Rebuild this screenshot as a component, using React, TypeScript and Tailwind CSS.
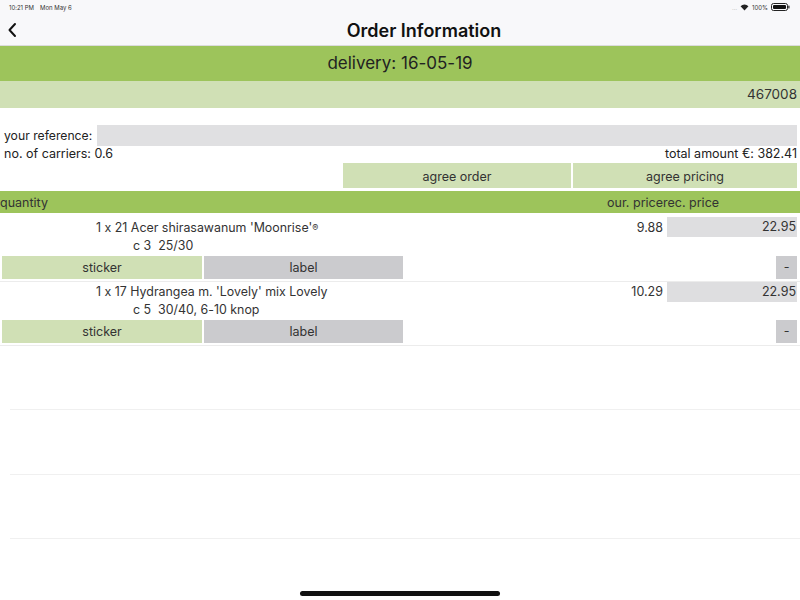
import React from "react";

function Battery() {
  return (
    <svg width="19" height="8" viewBox="0 0 19 8">
      <rect x="0.5" y="0.5" width="16" height="7" rx="2" fill="none" stroke="#222" strokeWidth="1" />
      <rect x="2" y="2" width="13" height="4" rx="1" fill="#111" />
      <rect x="17.3" y="2.5" width="1.2" height="3" rx="0.5" fill="#222" />
    </svg>
  );
}

function Wifi() {
  return (
    <svg width="9" height="7" viewBox="0 0 10 8">
      <path d="M5 7.5 L0.5 2.5 A6.5 6.5 0 0 1 9.5 2.5 Z" fill="#222" />
    </svg>
  );
}

type Item = { line1: string; line2: string; our: string; rec: string };

const items: Item[] = [
  { line1: "1 x 21 Acer shirasawanum 'Moonrise'", line2: "c 3  25/30", our: "9.88", rec: "22.95" },
  { line1: "1 x 17 Hydrangea m. 'Lovely' mix Lovely", line2: "c 5  30/40, 6-10 knop", our: "10.29", rec: "22.95" },
];

function ItemRow({ item, first }: { item: Item; first?: boolean }) {
  return (
    <div className="flex flex-col border-b border-[#ececec]">
      <div className={first ? "flex h-[43px]" : "flex h-[38px]"}>
        <div className={first ? "flex-1 pt-[6px] text-[12.4px] leading-[18px] text-[#333]" : "flex-1 pt-[1px] text-[12.4px] leading-[18px] text-[#333]"}>
          <div className="pl-[96px] whitespace-pre">
            {item.line1}
            {first ? <sup className="text-[9px] relative top-[-1px]">®</sup> : null}
          </div>
          <div className="pl-[133px] whitespace-pre">{item.line2}</div>
        </div>
        <div className={first ? "w-[100px] pt-[6px] text-right text-[12.5px] leading-[18px] text-[#333] pr-[4px]" : "w-[100px] pt-[1px] text-right text-[12.5px] leading-[18px] text-[#333] pr-[4px]"}>
          {item.our}
        </div>
        <div className={first ? "w-[133px] pt-[4px] pr-[3px]" : "w-[133px] pt-0 pr-[3px]"}>
          <div className="h-[20px] bg-[#dedee0] text-right text-[12.5px] leading-[20px] text-[#333] pr-[1px]">
            {item.rec}
          </div>
        </div>
      </div>
      <div className="flex h-[23px] mb-[2px] pl-[2px] pr-[3px]">
        <div className="w-[200px] bg-[#d0e0b5] text-center text-[12.5px] leading-[24px] text-[#333]">sticker</div>
        <div className="w-[199px] ml-[2px] bg-[#cbcbce] text-center text-[12.5px] leading-[24px] text-[#333]">label</div>
        <div className="flex-1" />
        <div className="w-[21px] bg-[#cbcbce] text-center text-[12.5px] leading-[22px] text-[#333]">-</div>
      </div>
    </div>
  );
}

export default function App() {
  return (
    <div
      className="w-[800px] h-[600px] bg-white flex flex-col relative overflow-hidden font-['Inter','Liberation_Sans',Arial,sans-serif] [font-feature-settings:'calt'_0]"
    >
      {/* status bar */}
      <div className="h-[14px] bg-[#f8f8fa] flex items-center justify-between px-[9px] text-[6px] text-[#333]">
        <div className="flex gap-[6px]">
          <span>10:21 PM</span>
          <span>Mon May 6</span>
        </div>
        <div className="flex items-center gap-[3px] pr-[1px]">
          <span className="text-[#bbb]">…</span>
          <Wifi />
          <span>100%</span>
          <Battery />
        </div>
      </div>
      {/* nav bar */}
      <div className="h-[32px] bg-[#f8f8fa] border-b border-[#dcdcdc] flex items-center relative">
        <svg className="absolute left-[7px] top-[8px]" width="10" height="16" viewBox="0 0 10 16">
          <path d="M8 2 L2.5 8 L8 14" fill="none" stroke="#111" strokeWidth="2" strokeLinecap="round" strokeLinejoin="round" />
        </svg>
        <div className="w-full text-center text-[18px] font-semibold text-[#111] pt-[1px] pl-[48px]">Order Information</div>
      </div>
      {/* delivery */}
      <div className="h-[35px] bg-[#9dc45b] flex items-center justify-center text-[17px] text-[#222]">delivery: 16-05-19</div>
      <div className="h-[27px] bg-[#d0e0b5] flex items-center justify-end pr-[3px] text-[13.5px] text-[#333]">467008</div>
      <div className="h-[17px]" />
      {/* reference */}
      <div className="h-[21px] flex items-center pl-[4px] pr-[3px] text-[12.2px] text-[#222]">
        <span className="whitespace-nowrap pt-[1px]">your reference:</span>
        <div className="flex-1 h-[21px] ml-[5px] bg-[#e0e0e2]" />
      </div>
      <div className="h-[17px] flex items-center justify-between pl-[4px] pr-[3px] text-[12.5px] text-[#222]">
        <span>no. of carriers: 0.6</span>
        <span>total amount €: 382.41</span>
      </div>
      <div className="h-[25px] flex pr-[3px]">
        <div className="w-[343px]" />
        <div className="w-[228px] bg-[#d0e0b5] text-center text-[12.5px] leading-[27px] text-[#333]">agree order</div>
        <div className="flex-1 ml-[2px] bg-[#d0e0b5] text-center text-[12.5px] leading-[27px] text-[#333]">agree pricing</div>
      </div>
      <div className="h-[3px]" />
      {/* header */}
      <div className="h-[22px] bg-[#9dc45b] flex items-center text-[12.5px] text-[#333] pt-[2px]">
        <span className="flex-1">quantity</span>
        <span className="w-[100px] text-right">our. price</span>
        <span className="w-[137px]">rec. price</span>
      </div>
      <ItemRow item={items[0]} first />
      <ItemRow item={items[1]} />
      {/* empty rows */}
      <div className="h-[64px] ml-[10px] border-b border-[#f0f0f0]" />
      <div className="h-[65px] ml-[10px] border-b border-[#f0f0f0]" />
      <div className="h-[64px] ml-[10px] border-b border-[#f0f0f0]" />
      {/* home indicator */}
      <div className="absolute left-[300px] top-[591px] w-[200px] h-[5px] rounded-full bg-[#111]" />
    </div>
  );
}
